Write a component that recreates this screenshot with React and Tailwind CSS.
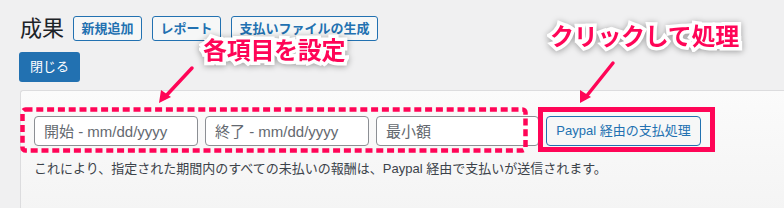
const jp = '[font-family:"Liberation_Sans","Noto_Sans_CJK_JP",sans-serif]';

function TitleButton({ children, w }) {
  return (
    <button className={`${w} h-[25px] border border-[#2271b1] rounded-[3px] bg-[#f6f7f7] text-[#2271b1] text-[13px] font-semibold leading-none`}>
      {children}
    </button>
  );
}

function Field({ placeholder, w }) {
  return (
    <input
      placeholder={placeholder}
      className={`${w} h-[30px] px-[9px] bg-white border border-[#8c8f94] rounded-[4px] [font-family:"Liberation_Sans","Noto_Sans_CJK_JP",sans-serif] text-[15px] placeholder:text-[#646970] outline-none`}
    />
  );
}

function Note({ children, className }) {
  return (
    <span
      className={`absolute [font-family:"Noto_Sans_CJK_JP",sans-serif] text-[24px] font-bold leading-none text-[#ff0557] tracking-[-0.3px] [-webkit-text-stroke:7px_white] [paint-order:stroke_fill] [filter:drop-shadow(0_1px_3px_rgba(0,0,0,0.35))] ${className}`}
    >
      {children}
    </span>
  );
}

export default function App() {
  return (
    <div className={`relative w-[784px] h-[208px] overflow-hidden bg-[#f0f0f1] ${jp}`}>
      {/* Header */}
      <div className="flex items-center gap-[10px] pl-[20px] pt-[16px]">
        <h1 className="text-[22px] leading-[25px] text-[#1d2327] mr-[-1px]">成果</h1>
        <TitleButton w="w-[69px]">新規追加</TitleButton>
        <TitleButton w="w-[69px]">レポート</TitleButton>
        <TitleButton w="w-[147px]">支払いファイルの生成</TitleButton>
      </div>
      <div className="pl-[19px] pt-[11px]">
        <button className="w-[61px] h-[30px] rounded-[3px] bg-[#2271b1] text-white text-[13px]">閉じる</button>
      </div>

      {/* Panel */}
      <div className="ml-[20px] mt-[8px] h-[140px] border-t border-l border-[#dcdcde] rounded-tl-[3px] bg-gradient-to-b from-[#fbfbfb] to-[#f3f3f3] pl-[13px] pt-[25px]">
        <div className="flex items-center gap-[7px]">
          <Field placeholder="開始 - mm/dd/yyyy" w="w-[164px]" />
          <Field placeholder="終了 - mm/dd/yyyy" w="w-[164px]" />
          <Field placeholder="最小額" w="w-[163px]" />
          <button className="w-[155px] h-[30px] border border-[#2271b1] rounded-[4px] bg-[#f6f7f7] text-[#2271b1] text-[13px]">
            Paypal 経由の支払処理
          </button>
        </div>
        <p className="mt-[13px] text-[13px] text-[#3c434a]">
          これにより、指定された期間内のすべての未払いの報酬は、Paypal 経由で支払いが送信されます。
        </p>
      </div>

      {/* Annotations */}
      <svg className="absolute left-0 top-0" width="784" height="208">
        <rect x="22.5" y="109.5" width="503" height="41" rx="3" fill="none" stroke="#ff0557" strokeWidth="4.5" strokeDasharray="7 3.8" />
        <rect x="540.5" y="109.5" width="172" height="40" fill="none" stroke="#ff0557" strokeWidth="5" />
        <g stroke="#ff0557" strokeWidth="3.5" strokeLinecap="round" fill="#ff0557">
          <line x1="192" y1="68" x2="164" y2="98" />
          <line x1="613" y1="63" x2="585" y2="98" />
        </g>
        <polygon points="159,103 161,90 171,97" fill="#ff0557" />
        <polygon points="580,103 580,90 591,97" fill="#ff0557" />
      </svg>
      <Note className="left-[203px] top-[37px]">各項目を設定</Note>
      <Note className="left-[550px] top-[23px]">クリックして処理</Note>
    </div>
  );
}
